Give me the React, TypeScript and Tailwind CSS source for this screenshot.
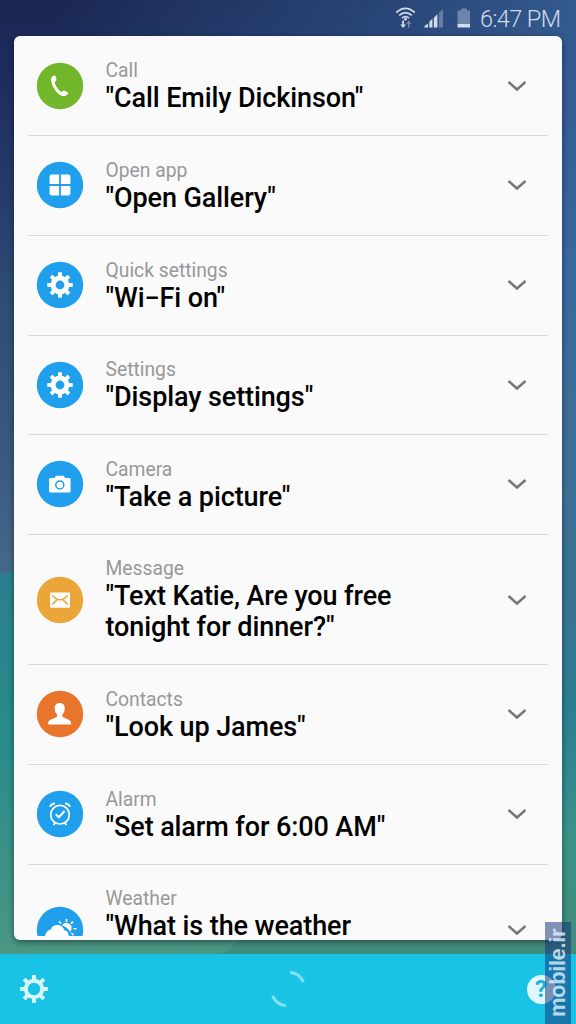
import React, { FC, ReactNode } from "react";

type Command = {
  label: string;
  phrase: string[];
  color: string;
  icon: ReactNode;
  center: string;
};

type GearType = { hole: number; hub: number; tooth: number; reach: number };

const GearShape: FC<GearType> = ({ hole, hub, tooth, reach }) => (
  <g>
    <circle
      r={(hole + hub) / 2}
      fill="none"
      stroke="currentColor"
      strokeWidth={hub - hole}
    />
    {[0, 45, 90, 135, 180, 225, 270, 315].map((angle) => (
      <rect
        key={angle}
        x={-tooth / 2}
        y={-reach}
        width={tooth}
        height={reach - hub + 1}
        rx="0.6"
        fill="currentColor"
        transform={`rotate(${angle})`}
      />
    ))}
  </g>
);

const commands: Command[] = [
  {
    label: "Call",
    phrase: ['"Call Emily Dickinson"'],
    color: "text-[#72b62b]",
    center: "pt-[26px]",
    icon: (
      <path
        d="M-8.6-8.2C-7.7-9.6-6-10.7-4.7-10.3C-3.9-9.2-3.4-6.9-3.7-5.8C-4-4.9-5.2-4.7-5.3-3.8C-4.8-.6-1.2 4.7 1.4 5.7C2.3 6 2.8 4.5 3.7 4.4C5 4.5 7.6 6 8.2 7.1C8 8.6 6 10 4.2 10.2C-2.3 10.5-10.4-2-8.6-8.2Z"
        fill="white"
      />
    ),
  },
  {
    label: "Open app",
    phrase: ['"Open Gallery"'],
    color: "text-[#1f9fec]",
    center: "pt-[26px]",
    icon: (
      <g fill="white">
        <path d="M-.9-.9H-10.4V-8.4Q-10.4-10.4-8.4-10.4H-.9Z" />
        <path d="M.9-.9H10.4V-8.4Q10.4-10.4 8.4-10.4H.9Z" />
        <path d="M-.9.9H-10.4V8.4Q-10.4 10.4-8.4 10.4H-.9Z" />
        <path d="M.9.9H10.4V8.4Q10.4 10.4 8.4 10.4H.9Z" />
      </g>
    ),
  },
  {
    label: "Quick settings",
    phrase: ['"Wi−Fi on"'],
    color: "text-[#1f9fec]",
    center: "pt-[26px]",
    icon: (
      <g className="text-white">
        <GearShape hole={4.4} hub={9.4} tooth={4} reach={12.7} />
      </g>
    ),
  },
  {
    label: "Settings",
    phrase: ['"Display settings"'],
    color: "text-[#1f9fec]",
    center: "pt-[26px]",
    icon: (
      <g className="text-white">
        <GearShape hole={4.4} hub={9.4} tooth={4} reach={12.7} />
      </g>
    ),
  },
  {
    label: "Camera",
    phrase: ['"Take a picture"'],
    color: "text-[#1f9fec]",
    center: "pt-[26px]",
    icon: (
      <g>
        <path
          d="M-9.3-6.1H-5.5L-4-8.2H3.6L5.3-6.1H9.3Q10.6-6.1 10.6-4.8V7.3Q10.6 8.6 9.3 8.6H-9.6Q-10.9 8.6-10.9 7.3V-4.8Q-10.9-6.1-9.3-6.1Z"
          fill="white"
        />
        <circle cx="-.2" cy=".9" r="4" fill="none" stroke="currentColor" strokeWidth="1.5" />
      </g>
    ),
  },
  {
    label: "Message",
    phrase: ['"Text Katie, Are you free', 'tonight for dinner?"'],
    color: "text-[#eca538]",
    center: "pt-[42px]",
    icon: (
      <g>
        <rect x="-10" y="-7.6" width="20" height="15.4" rx="1.4" fill="white" />
        <path
          d="M-7.6-4.6Q-3.5-.2 0-.2T7.6-4.6M-7.6 4.4L-2.8-.4M7.6 4.4L2.8-.4"
          fill="none"
          stroke="currentColor"
          strokeWidth="1.5"
        />
      </g>
    ),
  },
  {
    label: "Contacts",
    phrase: ['"Look up James"'],
    color: "text-[#e9752a]",
    center: "pt-[26px]",
    icon: (
      <path
        d="M-.3-10.9C-3.6-10.9-5.4-8.7-5.3-5.7C-5.3-3-4.4-.8-2.9.5V2.5C-4.5 4.7-11.8 4.8-11.8 9V10.4H11.1V9C11.1 4.8 3.8 4.7 2.3 2.5V.5C3.8-.8 4.7-3 4.7-5.7C4.8-8.7 3-10.9-.3-10.9Z"
        fill="white"
      />
    ),
  },
  {
    label: "Alarm",
    phrase: ['"Set alarm for 6:00 AM"'],
    color: "text-[#1f9fec]",
    center: "pt-[26px]",
    icon: (
      <g fill="none" stroke="white">
        <circle r="9.3" cy=".7" strokeWidth="1.7" />
        <path d="M-4.3.3L-1.2 3.3L4.6-3" strokeWidth="2" />
        <path d="M-10.2-7.4Q-8.4-10-5.2-10.7M10.2-7.4Q8.4-10 5.2-10.7" strokeWidth="2" />
        <path d="M-5.2 8.8L-6.2 11.2M5.2 8.8L6.2 11.2" strokeWidth="1.8" />
      </g>
    ),
  },
  {
    label: "Weather",
    phrase: ['"What is the weather'],
    color: "text-[#1f9fec]",
    center: "pt-[42px]",
    icon: (
      <g>
        <path
          d="M1.9-4.6A5.2 5.2 0 0 1 11.5-1.2Q11.2.8 10.3 1.9Q7-3.6 1.9-4.6Z"
          fill="white"
        />
        <path
          d="M6.5-7.9V-11M1-6.6L-1-8.6M10.8-6.2L13-8.4M13.4-1.2H16.6M11.4 3L13.6 5.2"
          stroke="white"
          strokeWidth="1.6"
        />
        <path
          d="M-14.8 8C-15.6 3.5-12-.1-9.1-.5C-8-6.5 2.7-6.5 4.1.2C7.2.4 8.7 2.4 8.3 5C10.8 6.4 11 12-1 12Q-14 13-14.8 8Z"
          fill="white"
        />
      </g>
    ),
  },
];

const Wallpaper: FC = () => (
  <svg viewBox="0 0 576 1024" className="absolute inset-0 h-full w-full" aria-hidden="true">
    <defs>
      <linearGradient id="sky" x2="0" y2="1">
        <stop offset="0" stopColor="#345b90" />
        <stop offset=".1" stopColor="#355e96" />
        <stop offset=".25" stopColor="#39699f" />
        <stop offset=".45" stopColor="#3f7199" />
        <stop offset=".6" stopColor="#377594" />
        <stop offset=".7" stopColor="#2b8093" />
        <stop offset=".82" stopColor="#3a9488" />
        <stop offset=".92" stopColor="#438c7d" />
      </linearGradient>
      <linearGradient id="shade" x2="0" y2="1">
        <stop offset="0" stopColor="#1a2750" />
        <stop offset=".12" stopColor="#1e2c60" />
        <stop offset=".28" stopColor="#233867" />
        <stop offset=".5" stopColor="#2e4c76" />
        <stop offset=".75" stopColor="#3a587f" />
        <stop offset=".95" stopColor="#44688a" />
      </linearGradient>
      <linearGradient id="fade">
        <stop offset="0" stopColor="white" />
        <stop offset=".1" stopColor="white" />
        <stop offset=".6" stopColor="#ccc" stopOpacity=".6" />
        <stop offset="1" stopColor="white" stopOpacity="0" />
      </linearGradient>
      <linearGradient id="hill" x2="0" y2="1">
        <stop offset="0" stopColor="#2c7d8e" />
        <stop offset=".45" stopColor="#278c8b" />
        <stop offset="1" stopColor="#4c9683" />
      </linearGradient>
      <mask id="left">
        <rect width="576" height="1024" fill="url(#fade)" />
      </mask>
    </defs>
    <rect width="576" height="1024" fill="url(#sky)" />
    <rect width="576" height="600" fill="url(#shade)" mask="url(#left)" />
    <path d="M0 574L60 558L400 820L222 954H0Z" fill="url(#hill)" />
  </svg>
);

const StatusBar: FC = () => (
  <div className="relative flex h-9 shrink-0 items-center justify-end pr-4 text-[#d3dbea]">
    <svg width="90" height="36" viewBox="380 0 90 36" className="shrink-0">
      <g fill="none" stroke="currentColor" strokeWidth="1.7">
        <path d="M396.3 12.5Q405.5 4.3 414.7 12.5" />
        <path d="M399.2 15.4Q405.5 9.8 411.8 15.4" />
        <path d="M401.9 18.1Q405.5 15.2 409.1 18.1" />
      </g>
      <circle cx="405.5" cy="19.2" r="1.4" fill="currentColor" />
      <path d="M402.2 20.5H404V24.5H406L403.1 28L400.2 24.5H402.2Z" fill="currentColor" />
      <path d="M407.9 27.5H409.5V23.7H411.4L408.7 20.5L406 23.7H407.9Z" fill="currentColor" opacity=".45" />
      <path
        d="M424.5 27.5V26L428 23.5V27.5ZM429.3 27.5V21.7L432.4 18.7V27.5ZM433.8 27.5V17.7L437.4 14.3V27.5Z"
        fill="currentColor"
      />
      <path d="M438.8 27.5V13L443 9V27.5Z" fill="currentColor" opacity=".35" />
      <path d="M457.5 10.5H461.3V8.5H467V10.5H470V24H457.5Z" fill="currentColor" opacity=".4" />
      <path d="M457.5 24H470V27.5H457.5Z" fill="currentColor" />
    </svg>
    <span className="ml-[10px] w-[80px] pt-[2px] text-[23.5px] leading-9 font-light tracking-[-0.6px] whitespace-nowrap">
      6:47 PM
    </span>
  </div>
);

const CommandRow: FC<{ command: Command; last: boolean }> = ({ command, last }) => (
  <div
    className={`mx-[14px] flex shrink-0 border-[#dadada] pl-[9px] ${
      last ? "" : "border-b"
    } ${command.phrase.length > 1 ? "h-[130.8px]" : "h-[99.55px]"}`}
  >
    <div className={`w-[46px] shrink-0 ${command.center} ${command.color}`}>
      <svg width="46" height="46" viewBox="-23 -23 46 46" className="block overflow-visible">
        <circle r="23.2" fill="currentColor" />
        {command.icon}
      </svg>
    </div>
    <div className="ml-[22.5px] grow pt-[22.6px]">
      <div className="text-[19.3px] leading-6 text-[#989898]">{command.label}</div>
      <div className="text-[27px] leading-[31px] font-medium tracking-[-0.1px] text-black">
        {command.phrase.map((line) => (
          <div key={line} className="whitespace-nowrap">
            {line}
          </div>
        ))}
      </div>
    </div>
    <div className={`mr-[20px] shrink-0 ${command.center}`}>
      <svg width="22" height="46" viewBox="0 0 22 46" className="block">
        <path d="M2.5 19L11 26.5L19.5 19" fill="none" stroke="#777" strokeWidth="2.5" />
      </svg>
    </div>
  </div>
);

const BottomBar: FC = () => (
  <div className="relative mt-auto flex h-[70px] shrink-0 items-center justify-between bg-[#19c3e6] px-5 text-[#d8f5fb]">
    <svg width="28" height="28" viewBox="-14 -14 28 28">
      <GearShape hole={6.2} hub={10.2} tooth={4} reach={14} />
    </svg>
    <svg width="40" height="40" viewBox="-20 -20 40 40">
      <path
        d="M2-16.8A17 17 0 0 1 15.5-7M-15.5 7A17 17 0 0 0-2 16.8"
        fill="none"
        stroke="#82e0f2"
        strokeWidth="3"
      />
    </svg>
    <div className="flex h-[29px] w-[29px] items-center justify-center rounded-full bg-[#dff6fc] pr-px text-[24px] leading-none font-bold text-[#19b5dc]">
      ?
    </div>
  </div>
);

const Watermark: FC = () => (
  <div className="absolute right-[5px] bottom-0 flex h-[102px] w-[26px] items-center justify-center bg-[#143278]/52">
    <span className="-rotate-90 font-['Liberation_Sans',sans-serif] text-[22px] leading-none font-bold tracking-[-0.4px] whitespace-nowrap text-[#e4f3fb]/80">
      mobile.ir
    </span>
  </div>
);

const App: FC = () => {
  return (
    <div className="relative flex h-[1024px] w-[576px] flex-col overflow-hidden font-[Roboto,sans-serif]">
      <Wallpaper />
      <StatusBar />
      <div className="relative mx-[14px] h-[904px] shrink-0 rounded-md bg-[#fafafa] shadow-[0_2px_6px_rgba(0,0,0,0.45)]">
        <div className="flex h-[900px] flex-col overflow-hidden pt-[0.9px]">
          {commands.map((command, index) => (
            <CommandRow
              key={command.label}
              command={command}
              last={index === commands.length - 1}
            />
          ))}
        </div>
      </div>
      <BottomBar />
      <Watermark />
    </div>
  );
};

export default App;
